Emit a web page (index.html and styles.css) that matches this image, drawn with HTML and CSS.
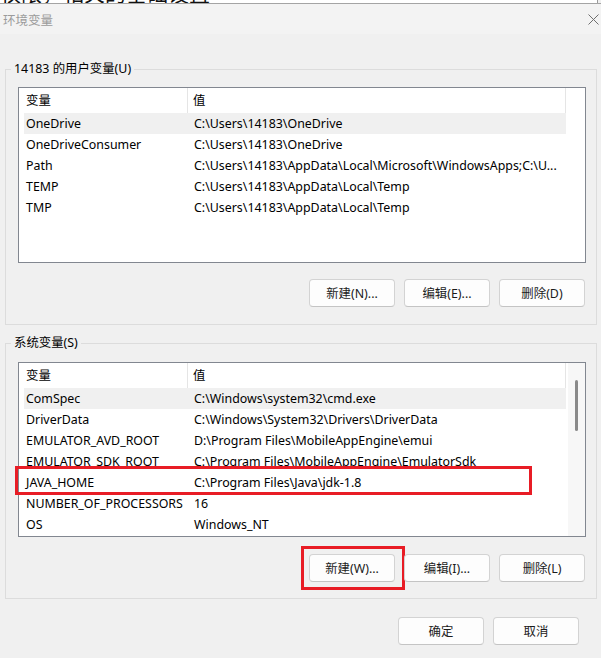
FILE: index.html
```html
<!DOCTYPE html>
<html lang="zh-CN">
<head>
<meta charset="utf-8">
<title>环境变量</title>
<link rel="stylesheet" href="styles.css">
</head>
<body>
<div class="behind"><span class="behind-text">权限，相关的基础设置</span></div>
<div class="dialog">
  <div class="titlebar">
    <span class="title">环境变量</span>
    <svg class="close" width="11" height="11" viewBox="0 0 11 11"><path d="M0.5 0.5L10.5 10.5M10.5 0.5L0.5 10.5" stroke="#6f6f6f" stroke-width="1" fill="none"/></svg>
  </div>
  <div class="content">
    <fieldset class="group group-user">
      <legend>14183 的用户变量(U)</legend>
      <div class="list list-user">
        <div class="lmain">
          <div class="lhead"><div class="h1">变量</div><div class="h2">值</div></div>
          <div class="row sel"><div class="c1">OneDrive</div><div class="c2">C:\Users\14183\OneDrive</div></div>
          <div class="row"><div class="c1">OneDriveConsumer</div><div class="c2">C:\Users\14183\OneDrive</div></div>
          <div class="row"><div class="c1">Path</div><div class="c2">C:\Users\14183\AppData\Local\Microsoft\WindowsApps;C:\U...</div></div>
          <div class="row"><div class="c1">TEMP</div><div class="c2">C:\Users\14183\AppData\Local\Temp</div></div>
          <div class="row"><div class="c1">TMP</div><div class="c2">C:\Users\14183\AppData\Local\Temp</div></div>
        </div>
      </div>
      <div class="btns btns-user">
        <button class="btn">新建(N)...</button>
        <button class="btn">编辑(E)...</button>
        <button class="btn">删除(D)</button>
      </div>
    </fieldset>
    <fieldset class="group group-sys">
      <legend>系统变量(S)</legend>
      <div class="list list-sys">
        <div class="lmain">
          <div class="lhead"><div class="h1">变量</div><div class="h2">值</div></div>
          <div class="row sel"><div class="c1">ComSpec</div><div class="c2">C:\Windows\system32\cmd.exe</div></div>
          <div class="row"><div class="c1">DriverData</div><div class="c2">C:\Windows\System32\Drivers\DriverData</div></div>
          <div class="row"><div class="c1">EMULATOR_AVD_ROOT</div><div class="c2">D:\Program Files\MobileAppEngine\emui</div></div>
          <div class="row"><div class="c1">EMULATOR_SDK_ROOT</div><div class="c2">C:\Program Files\MobileAppEngine\EmulatorSdk</div></div>
          <div class="row marked-row"><div class="c1">JAVA_HOME</div><div class="c2">C:\Program Files\Java\jdk-1.8</div></div>
          <div class="row"><div class="c1">NUMBER_OF_PROCESSORS</div><div class="c2">16</div></div>
          <div class="row"><div class="c1">OS</div><div class="c2">Windows_NT</div></div>
        </div>
        <div class="vscroll"><div class="thumb"></div></div>
      </div>
      <div class="btns btns-sys">
        <button class="btn marked-btn">新建(W)...</button>
        <button class="btn">编辑(I)...</button>
        <button class="btn">删除(L)</button>
      </div>
    </fieldset>
    <div class="btns btns-dialog">
      <button class="btn">确定</button>
      <button class="btn">取消</button>
    </div>
  </div>
</div>
</body>
</html>
```
FILE: styles.css
```css
html, body {
  margin: 0;
  padding: 0;
}
body {
  width: 601px;
  height: 658px;
  overflow: hidden;
  background: #f0f0f0;
  font-family: "Noto Sans", "Noto Sans CJK SC", sans-serif;
  font-size: 12.4px;
  color: #000;
}
.behind {
  height: 3px;
  overflow: hidden;
  background: #ffffff;
  border-right: 1px solid #9a9a9a;
  width: 597px;
}
.behind-text {
  display: block;
  margin-top: -19px;
  font-family: "Noto Sans CJK SC", sans-serif;
  font-size: 21px;
  line-height: 22px;
  color: #111;
  white-space: nowrap;
}
.dialog {
  border-top: 1px solid #a4a4a4;
}
.titlebar {
  height: 30px;
  background: #f3f3f3;
  display: flex;
  align-items: center;
  justify-content: space-between;
  padding: 0 2px 0 3px;
}
.title {
  font-family: "Noto Sans CJK SC", sans-serif;
  font-size: 12.5px;
  color: #9b9b9b;
}
.close {
  display: block;
}
.content {
  padding: 0 4px 0 5px;
}
.group {
  margin: 0;
  border: 1px solid #dcdcdc;
  padding: 0 10px 17px 5px;
  min-width: 0;
}
.group legend {
  padding: 0 3px;
  line-height: 16px;
  font-size: 12.4px;
  color: #000;
}
.group-user {
  margin-top: 27px;
}
.group-sys {
  margin-top: 10px;
  padding-bottom: 16px;
}
.list {
  margin-left: 7px;
  border: 1px solid #828790;
  background: #fff;
  display: flex;
  box-sizing: border-box;
}
.list-user {
  margin-top: 10px;
  height: 176px;
}
.list-sys {
  margin-top: 11px;
  height: 175px;
}
.lmain {
  flex: 1;
  min-width: 0;
}
.lhead {
  display: flex;
  height: 25px;
  line-height: 25px;
  width: 547px;
}
.h1 {
  width: 169px;
  box-sizing: border-box;
  padding-left: 7px;
  border-right: 1px solid #e5e5e5;
}
.h2 {
  flex: 1;
  padding-left: 5px;
  border-right: 1px solid #e5e5e5;
}
.row {
  display: flex;
  height: 21px;
  line-height: 21px;
  margin-left: 5px;
  width: 542px;
  white-space: nowrap;
}
.row.sel {
  background: #f0f0f0;
}
.c1 {
  width: 164px;
  box-sizing: border-box;
  padding-left: 2px;
  overflow: hidden;
}
.c2 {
  flex: 1;
  padding-left: 6px;
  overflow: hidden;
}
.vscroll {
  width: 17px;
  background: #f7f7f7;
  display: flex;
  justify-content: center;
}
.thumb {
  margin-top: 17px;
  width: 3px;
  height: 51px;
  border-radius: 2px;
  background: #8a8a8a;
}
.btns {
  display: flex;
  justify-content: flex-end;
  gap: 9px;
}
.btns-user {
  margin-top: 16px;
  padding-right: 1px;
}
.btns-sys {
  margin-top: 17px;
  padding-right: 1px;
}
.btns-dialog {
  margin-top: 18px;
  padding-right: 18px;
}
.btn {
  width: 86px;
  height: 28px;
  margin: 0;
  padding: 0;
  box-sizing: border-box;
  background: #fdfdfd;
  border: 1px solid #d3d3d3;
  border-bottom-color: #c4c4c4;
  border-radius: 4px;
  font-family: "Noto Sans", "Noto Sans CJK SC", sans-serif;
  font-size: 12.4px;
  color: #1b1b1b;
  position: relative;
}
.marked-row {
  position: relative;
}
.marked-row::after {
  content: "";
  position: absolute;
  left: -9px;
  top: -6px;
  width: 517px;
  height: 29px;
  border: 3px solid #e81c25;
  box-sizing: border-box;
}
.marked-btn::after {
  content: "";
  position: absolute;
  left: -9px;
  top: -9px;
  width: 104px;
  height: 44px;
  border: 3px solid #e81c25;
  box-sizing: border-box;
}
```
